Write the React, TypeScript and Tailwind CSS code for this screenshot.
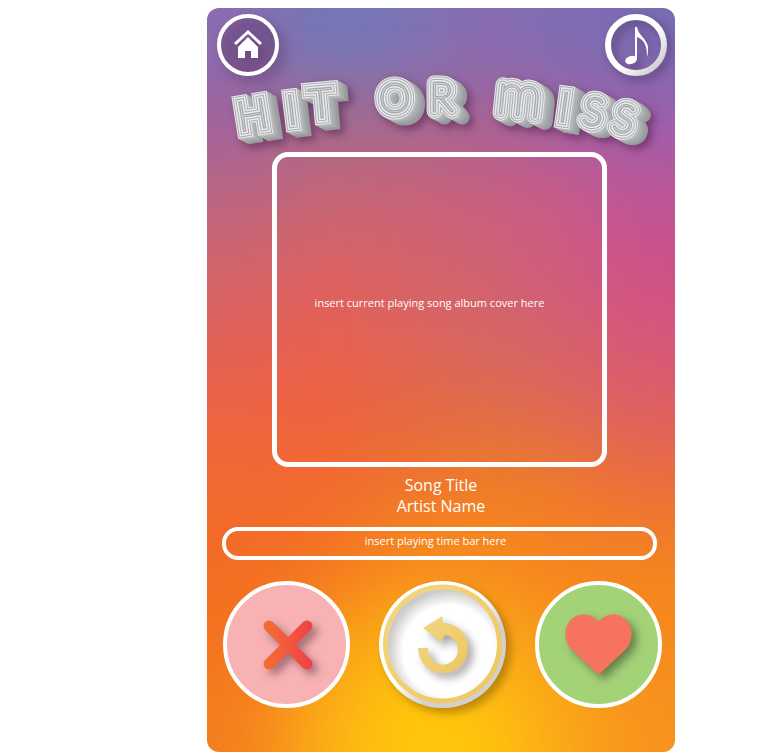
import React from "react";

const meshRows = [
  ["#8a6cb0", "#6f79b9", "#7a74b6", "#8a6cb2", "#7f6db4", "#7a6cb2"],
  ["#a0629c", "#a26a8e", "#a26890", "#a86294", "#a261a2", "#9c5fac"],
  ["#ba6684", "#c66674", "#c86478", "#c8607e", "#ca5a88", "#bc5698"],
  ["#d2646a", "#dc6062", "#d66268", "#d06270", "#d05c7e", "#d05088"],
  ["#e06058", "#ea604e", "#de645a", "#d66662", "#d6626a", "#d6587a"],
  ["#ee6440", "#f0613e", "#e6683f", "#e06e44", "#e06a50", "#de6060"],
  ["#f26a30", "#f26a2c", "#f1762a", "#f27e22", "#f07c28", "#ec7038"],
  ["#f36c22", "#f4741f", "#f78c1c", "#f78a1c", "#f6841e", "#f5841e"],
  ["#f4721f", "#f99a1a", "#fdb513", "#fcb016", "#f8961c", "#f68a1e"],
  ["#f47e1e", "#fcb016", "#ffc80a", "#ffc60c", "#fbaa18", "#f7931d"],
];

type Letter = {
  char: string;
  cx: number;
  cy: number;
  angle: number;
  advance: number;
  size: number;
  join: "miter" | "round";
  space?: boolean;
};

const letters: Letter[] = [
  { char: "H", cx: 252, cy: 115, angle: -9, advance: 29, size: 40, join: "miter" },
  { char: "I", cx: 291, cy: 110, angle: -7, advance: 9, size: 40, join: "miter" },
  { char: "T", cx: 321, cy: 103, angle: -5, advance: 23, size: 40, join: "miter", space: true },
  { char: "O", cx: 395, cy: 98, angle: 0, advance: 32, size: 40, join: "round" },
  { char: "R", cx: 441, cy: 97, angle: 0, advance: 23, size: 40, join: "round", space: true },
  { char: "m", cx: 519, cy: 101, angle: 6, advance: 46, size: 58, join: "round" },
  { char: "I", cx: 564, cy: 107, angle: 8, advance: 9, size: 40, join: "miter" },
  { char: "S", cx: 593, cy: 111, angle: 10, advance: 19, size: 38, join: "round" },
  { char: "S", cx: 624, cy: 118, angle: 13, advance: 19, size: 38, join: "round" },
];

const rings = [
  { width: 15, color: "#e9eaec" },
  { width: 13, color: "#a9acaf" },
  { width: 11, color: "#e9eaec" },
  { width: 8, color: "#a9acaf" },
  { width: 6, color: "#e9eaec" },
  { width: 3, color: "#a9acaf" },
];

function Backdrop() {
  return (
    <svg className="absolute inset-0 -z-10 h-full w-full" viewBox="0 0 6 10" preserveAspectRatio="none" aria-hidden="true">
      <defs>
        <filter id="soften" x="-20%" y="-20%" width="140%" height="140%" colorInterpolationFilters="sRGB">
          <feGaussianBlur stdDeviation="0.5" />
        </filter>
      </defs>
      <g filter="url(#soften)">
        {meshRows.map((row, r) =>
          row.map((color, c) => {
            const left = c === 0 ? -2 : c;
            const right = c === 5 ? 8 : c + 1.05;
            const top = r === 0 ? -2 : r;
            const bottom = r === 9 ? 12 : r + 1.05;
            return <rect key={`${r}-${c}`} x={left} y={top} width={right - left} height={bottom - top} fill={color} />;
          }),
        )}
      </g>
    </svg>
  );
}

function Wordmark() {
  return (
    <h1>
      <svg className="block w-full overflow-visible" viewBox="207 76 468 76" role="img" aria-label="HIT OR MISS">
        <g className="drop-shadow-[4px_4px_4px_rgba(60,10,50,0.45)]">
          {Array.from({ length: 10 }, (_, i) => 10 - i).map((n) => (
            <use
              key={n}
              href="#wordmark"
              x={n}
              y={n * 0.55}
              fill="none"
              strokeWidth="15"
              stroke={["#97999c", "#9da0a2", "#a5a8aa", "#adb0b2", "#b8babc"][Math.floor((10 - n) / 2)]}
            />
          ))}
          {rings.map((ring) => (
            <use key={ring.width} href="#wordmark" stroke={ring.color} strokeWidth={ring.width} />
          ))}
          <g fill="#e9eaec">
            <text id="wordmark" className="font-['Lato',sans-serif] font-thin">
              {letters.map((l, i) => {
                const a = (l.angle * Math.PI) / 180;
                const dx = -l.advance / 2;
                const dy = 14;
                return (
                  <React.Fragment key={i}>
                    <tspan
                      x={l.cx + dx * Math.cos(a) - dy * Math.sin(a)}
                      y={l.cy + dx * Math.sin(a) + dy * Math.cos(a)}
                      rotate={l.angle}
                      fontSize={l.size}
                      strokeLinejoin={l.join}
                    >
                      {l.char}
                    </tspan>
                    {l.space ? " " : null}
                  </React.Fragment>
                );
              })}
            </text>
          </g>
        </g>
      </svg>
    </h1>
  );
}

function HomeIcon() {
  return (
    <svg className="block h-full w-full overflow-visible" viewBox="0 0 62 62" aria-hidden="true">
      <g className="drop-shadow-[6px_6px_6px_rgba(40,10,50,0.35)]">
        <circle cx="31" cy="31" r="29" fill="#6c4478" fillOpacity="0.35" stroke="#fff" strokeWidth="4" />
        <path d="M18 30 31 18 44 30" fill="none" stroke="#fff" strokeWidth="3" />
        <path d="M31 23 41 33V44H34V37H28V44H21V33Z" fill="#fff" />
      </g>
    </svg>
  );
}

function NoteIcon() {
  return (
    <svg className="block h-full w-full overflow-visible" viewBox="0 0 62 62" aria-hidden="true">
      <defs>
        <linearGradient id="noteRing" x1="0.2" y1="0.2" x2="0.9" y2="0.9">
          <stop offset="0.5" stopColor="#fff" />
          <stop offset="1" stopColor="#cfcdd2" />
        </linearGradient>
      </defs>
      <g className="drop-shadow-[4px_4px_5px_rgba(40,10,50,0.4)]">
        <circle cx="31" cy="31" r="28" fill="none" stroke="url(#noteRing)" strokeWidth="6" />
        <ellipse cx="26" cy="46" rx="6" ry="4" transform="rotate(-18 26 46)" fill="#fff" />
        <path d="M30 13H32C33 21 42 25 43 33C43 37 43 40 42 43C42 33 40 26 32 23V46H30Z" fill="#fff" />
      </g>
    </svg>
  );
}

function CrossIcon() {
  return (
    <svg className="block h-full w-full" viewBox="0 0 127 127" aria-hidden="true">
      <defs>
        <linearGradient id="cross" gradientUnits="userSpaceOnUse" x1="40" y1="0" x2="90" y2="0">
          <stop stopColor="#f37030" />
          <stop offset="1" stopColor="#ef4048" />
        </linearGradient>
      </defs>
      <circle cx="63.500" cy="63.500" r="61.500" fill="#f8b2b4" stroke="#fff" strokeWidth="4" />
      <path
        className="drop-shadow-[5px_5px_4px_rgba(70,40,50,0.5)]"
        d="M46 45 84 83M84 45 46 83"
        stroke="url(#cross)"
        strokeWidth="11"
        strokeLinecap="round"
      />
    </svg>
  );
}

function ReplayIcon() {
  return (
    <svg className="block h-full w-full overflow-visible" viewBox="0 0 127 127" aria-hidden="true">
      <defs>
        <linearGradient id="rim" x1="0.1" y1="0.1" x2="0.9" y2="0.9">
          <stop offset="0.450" stopColor="#fff" />
          <stop offset="0.700" stopColor="#d2d0d2" />
        </linearGradient>
        <linearGradient id="gold" x1="0" y1="0" x2="1" y2="1">
          <stop stopColor="#f2d680" />
          <stop offset="1" stopColor="#efc660" />
        </linearGradient>
        <radialGradient id="dish" gradientUnits="userSpaceOnUse" cx="70" cy="70" r="64">
          <stop offset="0.720" stopColor="#fff" />
          <stop offset="0.950" stopColor="#cecaca" />
        </radialGradient>
      </defs>
      <circle className="drop-shadow-[5px_5px_4px_rgba(110,70,0,0.45)]" cx="63.500" cy="63.500" r="63.500" fill="url(#rim)" />
      <circle cx="63.500" cy="63" r="55" fill="url(#dish)" />
      <circle cx="63.500" cy="63" r="57" fill="none" stroke="url(#gold)" strokeWidth="5" />
      <path
        className="drop-shadow-[5px_5px_4px_rgba(60,50,60,0.45)]"
        d="M44 47 63.500 35V42A25 25 0 1 1 39 67H49A15 15 0 1 0 67 54C64 55 63.500 57 63.500 62Z"
        fill="url(#gold)"
      />
    </svg>
  );
}

function HeartIcon() {
  return (
    <svg className="block h-full w-full" viewBox="0 0 127 127" aria-hidden="true">
      <circle cx="63.500" cy="63.500" r="61.500" fill="#a4d277" stroke="#fff" strokeWidth="4" />
      <path
        className="drop-shadow-[5px_5px_4px_rgba(40,50,30,0.5)]"
        d="M63.500 94 37 69C28 60 28 44 38 37C46 31 58 33 63.500 41C69 33 81 31 89 37C99 44 99 60 90 69Z"
        fill="#f5735f"
      />
    </svg>
  );
}

export default function App() {
  return (
    <main className="bg-white pt-2 pr-[104px] pl-[207px] font-['Open_Sans','Noto_Sans',sans-serif] text-white">
      <section className="relative isolate overflow-hidden rounded-xl pb-11">
        <Backdrop />
        <header className="flex justify-between pt-[6px] pr-2 pl-[10px]">
          <button type="button" aria-label="Home" className="size-[62px] rounded-full">
            <HomeIcon />
          </button>
          <button type="button" aria-label="Music" className="size-[62px] rounded-full">
            <NoteIcon />
          </button>
        </header>
        <Wordmark />
        <div className="mr-[68px] ml-[65px] flex h-[315px] items-center justify-center rounded-2xl border-5 border-white pr-5 pb-3 text-[11px]">
          <p className="whitespace-nowrap">insert current playing song album cover here</p>
        </div>
        <div className="pt-2 text-center text-base leading-[21px]">
          <h2>Song Title</h2>
          <p>Artist Name</p>
        </div>
        <div className="mt-[10px] mr-[18px] ml-[15px] flex h-[33px] items-center justify-center rounded-2xl border-4 border-white pr-2 pb-1 text-[11px]">
          <p>insert playing time bar here</p>
        </div>
        <div className="mt-[21px] flex justify-between pr-[13px] pl-4">
          <button type="button" aria-label="Miss" className="size-[127px] rounded-full">
            <CrossIcon />
          </button>
          <button type="button" aria-label="Replay" className="size-[127px] rounded-full">
            <ReplayIcon />
          </button>
          <button type="button" aria-label="Hit" className="size-[127px] rounded-full">
            <HeartIcon />
          </button>
        </div>
      </section>
    </main>
  );
}
